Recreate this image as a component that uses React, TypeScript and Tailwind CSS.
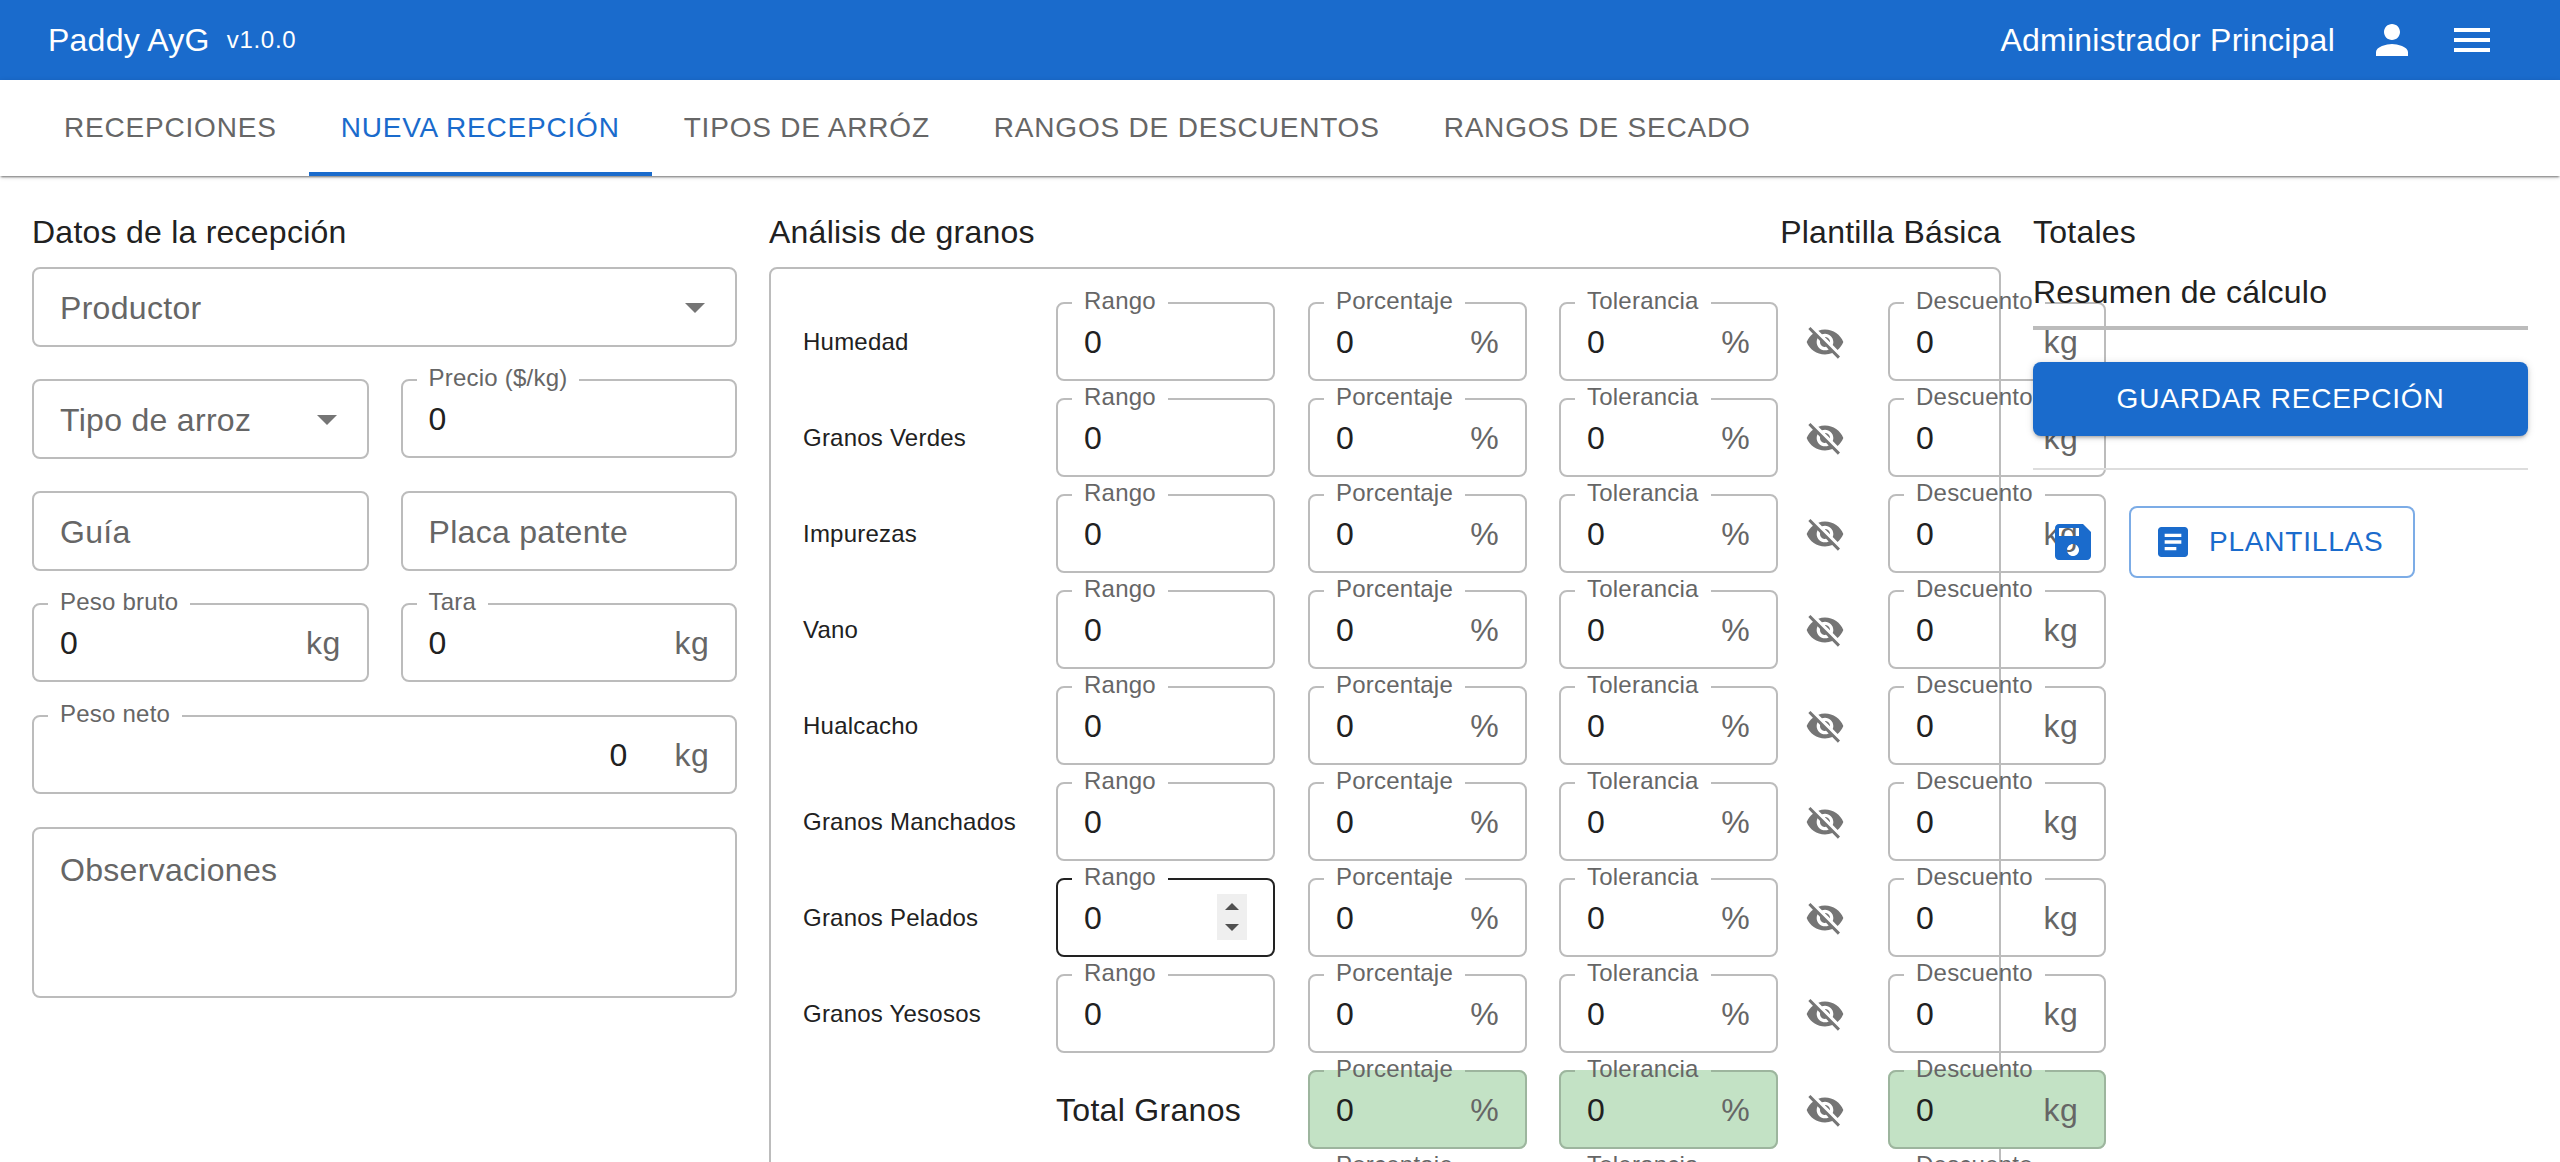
import type { ReactNode } from "react";

const FONT = "font-['Liberation_Sans',Arial,sans-serif]";

const GRANOS = [
  "Humedad",
  "Granos Verdes",
  "Impurezas",
  "Vano",
  "Hualcacho",
  "Granos Manchados",
  "Granos Pelados",
  "Granos Yesosos",
];

const TABS = ["Recepciones", "Nueva recepción", "Tipos de arróz", "Rangos de descuentos", "Rangos de secado"];

function Icon({ d, className }: { d: string; className: string }) {
  return (
    <svg viewBox="0 0 24 24" fill="currentColor" className={className}>
      <path d={d} />
    </svg>
  );
}

const EYE_OFF =
  "M12 7c2.76 0 5 2.24 5 5 0 .65-.13 1.26-.36 1.83l2.92 2.92c1.51-1.26 2.7-2.89 3.43-4.75-1.73-4.39-6-7.5-11-7.5-1.4 0-2.74.25-3.98.7l2.16 2.16C10.74 7.13 11.35 7 12 7zM2 4.27l2.28 2.28.46.46C3.08 8.3 1.78 10.02 1 12c1.73 4.39 6 7.5 11 7.5 1.55 0 3.03-.3 4.38-.84l.42.42L19.73 22 21 20.73 3.27 3 2 4.27zM7.53 9.8l1.55 1.55c-.05.21-.08.43-.08.65 0 1.66 1.34 3 3 3 .22 0 .44-.03.65-.08l1.55 1.55c-.67.33-1.41.53-2.2.53-2.76 0-5-2.24-5-5 0-.79.2-1.53.53-2.2zm4.31-.78l3.15 3.15.02-.16c0-1.66-1.34-3-3-3l-.17.01z";
const PERSON =
  "M12 12c2.21 0 4-1.79 4-4s-1.79-4-4-4-4 1.79-4 4 1.79 4 4 4zm0 2c-2.67 0-8 1.34-8 4v2h16v-2c0-2.66-5.33-4-8-4z";
const MENU = "M3 18h18v-2H3v2zm0-5h18v-2H3v2zm0-7v2h18V6H3z";
const SAVE =
  "M17 3H5c-1.11 0-2 .9-2 2v14c0 1.1.89 2 2 2h14c1.1 0 2-.9 2-2V7l-4-4zm-5 16c-1.66 0-3-1.34-3-3s1.34-3 3-3 3 1.34 3 3-1.34 3-3 3zm3-10H5V5h10v4z";
const ARTICLE =
  "M19 3H5c-1.1 0-2 .9-2 2v14c0 1.1.9 2 2 2h14c1.1 0 2-.9 2-2V5c0-1.1-.9-2-2-2zm-5 14H7v-2h7v2zm3-4H7v-2h10v2zm0-4H7V7h10v2z";

// label in the notch of the top border
function Legend({ text }: { text: string }) {
  return (
    <legend className="ml-[14px] px-3 text-[24px] leading-[26px] tracking-[0.00938em] text-[#666666]">
      <span className="relative -top-[2px]">{text}</span>
    </legend>
  );
}

function Field({
  label,
  value,
  unit,
  green,
  focused,
  children,
  className = "",
}: {
  label: string;
  value?: string;
  unit?: string;
  green?: boolean;
  focused?: boolean;
  children?: ReactNode;
  className?: string;
}) {
  return (
    <fieldset
      className={`-mt-[12px] mb-[1px] h-[91px] min-w-0 shrink-0 rounded-lg border-2 ${
        focused ? "border-[#222222]" : green ? "border-[#9db59e]" : "border-[#bcbcbc]"
      } ${green ? "bg-[#c3e2c5]" : ""} ${className}`}
    >
      <Legend text={label} />
      <div className="-mt-[12px] flex h-[76px] items-center justify-between px-[26px] text-[32px] tracking-[0.00938em]">
        <span className="text-[#212121]">{value}</span>
        {children}
        {unit && <span className="text-[#666666]">{unit}</span>}
      </div>
    </fieldset>
  );
}

function Placeholder({ text }: { text: string }) {
  return (
    <div className="flex h-20 items-center rounded-lg border-2 border-[#bcbcbc] px-[26px] pt-[1px] text-[32px] tracking-[0.00938em] text-[#666666]">
      {text}
    </div>
  );
}

function SelectBox({ text }: { text: string }) {
  return (
    <div className="flex h-20 items-center justify-between rounded-lg border-2 border-[#bcbcbc] pl-[26px] pr-[16px] pt-[1px] text-[32px] tracking-[0.00938em] text-[#666666]">
      {text}
      <Icon d="M7 10l5 5 5-5z" className="-mt-[1px] h-12 w-12 text-[#757575]" />
    </div>
  );
}

function Spinner() {
  return (
    <div className="-mt-[2px] flex h-[46px] w-[30px] flex-col items-center justify-center gap-[14px] bg-[#efefef]">
      <div className="h-0 w-0 border-x-[7px] border-b-[7px] border-x-transparent border-b-[#505050]" />
      <div className="h-0 w-0 border-x-[7px] border-t-[7px] border-x-transparent border-t-[#505050]" />
    </div>
  );
}

function EyeButton() {
  return (
    <div className="w-[110px] shrink-0 pl-[27px]">
      <Icon d={EYE_OFF} className="h-10 w-10 text-[#757575]" />
    </div>
  );
}

function GrainRow({ name }: { name: string }) {
  const focused = name === "Granos Pelados";
  return (
    <div className="flex h-20 shrink-0 items-center">
      <div className="w-[253px] shrink-0 text-[24px] tracking-[0.00938em] text-[#212121]">{name}</div>
      <Field label="Rango" value="0" focused={focused} className="w-[219px]">
        {focused && <Spinner />}
      </Field>
      <Field label="Porcentaje" value="0" unit="%" className="ml-[33px] w-[219px]" />
      <Field label="Tolerancia" value="0" unit="%" className="ml-[32px] w-[219px]" />
      <EyeButton />
      <Field label="Descuento" value="0" unit="kg" className="w-[218px]" />
    </div>
  );
}

function TotalRow({ title, green }: { title?: string; green?: boolean }) {
  return (
    <div className="flex h-20 shrink-0 items-center">
      <div className="w-[253px] shrink-0" />
      <div className="w-[219px] shrink-0 text-[32px] tracking-[0.00938em] text-[#212121]">{title}</div>
      <Field label="Porcentaje" value="0" unit="%" green={green} className="ml-[33px] w-[219px]" />
      <Field label="Tolerancia" value="0" unit="%" green={green} className="ml-[32px] w-[219px]" />
      <EyeButton />
      <Field label="Descuento" value="0" unit="kg" green={green} className="w-[218px]" />
    </div>
  );
}

export default function App() {
  return (
    <div className={`h-screen overflow-hidden bg-white ${FONT}`}>
      <header className="flex h-20 items-center bg-[#1a6bcc] pl-[48px] pr-[61px] text-white">
        <span className="text-[32px] tracking-[0.0075em]">Paddy AyG</span>
        <span className="ml-[17px] text-[24px] tracking-[0.03em]">v1.0.0</span>
        <span className="ml-auto text-[32px] tracking-[0.0075em]">Administrador Principal</span>
        <Icon d={PERSON} className="ml-[33px] h-12 w-12" />
        <Icon d={MENU} className="ml-[32px] mr-[3px] h-12 w-12" />
      </header>

      <nav className="flex h-24 shadow-[0_2px_2px_-1px_rgba(0,0,0,0.5),0_1px_5px_rgba(0,0,0,0.14)]">
        <div className="flex pl-8">
          {TABS.map((tab) => (
            <div
              key={tab}
              className={`flex items-center border-b-4 px-8 pt-[4px] text-[28px] uppercase tracking-[0.02857em] ${
                tab === "Nueva recepción" ? "border-[#1a6bcc] text-[#1a6bcc]" : "border-transparent text-[#666666]"
              }`}
            >
              {tab}
            </div>
          ))}
        </div>
      </nav>

      <main className="flex gap-8 px-8 pt-[37px]">
        <section className="w-[705px] shrink-0">
          <h2 className="h-[54px] text-[32px] leading-[38px] tracking-[0.0075em] text-[#212121]">Datos de la recepción</h2>
          <div className="flex flex-col gap-8">
            <SelectBox text="Productor" />
            <div className="grid grid-cols-2 gap-8">
              <SelectBox text="Tipo de arroz" />
              <Field label="Precio ($/kg)" value="0" />
            </div>
            <div className="grid grid-cols-2 gap-8">
              <Placeholder text="Guía" />
              <Placeholder text="Placa patente" />
            </div>
            <div className="grid grid-cols-2 gap-8">
              <Field label="Peso bruto" value="0" unit="kg" />
              <Field label="Tara" value="0" unit="kg" />
            </div>
            <fieldset className="-mt-[12px] mb-[1px] h-[91px] min-w-0 rounded-lg border-2 border-[#bcbcbc]">
              <Legend text="Peso neto" />
              <div className="-mt-[12px] flex h-[76px] items-center justify-end px-[26px] text-[32px] tracking-[0.00938em]">
                <span className="mr-[47px] text-[#212121]">0</span>
                <span className="text-[#666666]">kg</span>
              </div>
            </fieldset>
            <div className="h-[171px] rounded-lg border-2 border-[#bcbcbc] px-[26px] pt-[17px] text-[32px] tracking-[0.00938em] text-[#666666]">
              Observaciones
            </div>
          </div>
        </section>

        <section className="w-[1232px] shrink-0">
          <div className="flex h-[54px] justify-between text-[32px] leading-[38px] tracking-[0.0075em] text-[#212121]">
            <h2>Análisis de granos</h2>
            <span>Plantilla Básica</span>
          </div>
          <div className="flex h-[1000px] flex-col gap-4 rounded-lg border-2 border-[#bcbcbc] pl-[32px] pt-[33px]">
            {GRANOS.map((name) => (
              <GrainRow key={name} name={name} />
            ))}
            <TotalRow title="Total Granos" green />
            <TotalRow />
          </div>
        </section>

        <aside className="relative z-10 w-[495px] shrink-0">
          <h2 className="h-[38px] text-[32px] leading-[38px] tracking-[0.0075em] text-[#212121]">Totales</h2>
          <h3 className="mt-[22px] text-[32px] leading-[38px] tracking-[0.0075em] text-[#212121]">Resumen de cálculo</h3>
          <div className="mt-[15px] h-1 bg-[#bcbcbc]" />
          <button className="mt-[32px] block h-[74px] w-full rounded-lg bg-[#1a6bcc] text-[28px] uppercase tracking-[0.02857em] text-white shadow-[0_3px_3px_-2px_rgba(0,0,0,0.2),0_2px_4px_rgba(0,0,0,0.14),0_1px_8px_rgba(0,0,0,0.12)]">
            Guardar recepción
          </button>
          <div className="mt-[32px] h-[2px] bg-[#dddddd]" />
          <div className="mt-[36px] flex items-center gap-8 pl-4">
            <Icon d={SAVE} className="h-12 w-12 text-[#1a6bcc]" />
            <button className="flex h-[72px] w-[286px] items-center gap-4 rounded-lg border-2 border-[#7cace6] pl-[22px] text-[28px] uppercase tracking-[0.02857em] text-[#1a6bcc]">
              <Icon d={ARTICLE} className="h-10 w-10" />
              Plantillas
            </button>
          </div>
        </aside>
      </main>
    </div>
  );
}
